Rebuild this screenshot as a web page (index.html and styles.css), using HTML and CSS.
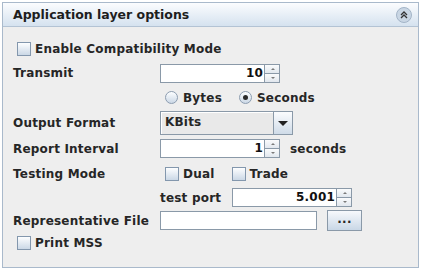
FILE: index.html
```html
<!DOCTYPE html>
<html lang="en">
<head>
    <meta charset="UTF-8">
    <title>Application layer options</title>
    <link rel="stylesheet" href="styles.css">
</head>
<body>
    <div class="panel">
        <div class="panel-header">
            <span class="panel-title">Application layer options</span>
            <span class="collapse-btn">
                <svg width="16" height="16" viewBox="0 0 16 16">
                    <circle cx="8" cy="8" r="7.5" fill="#c9d6e4" stroke="#a3b4c7"/>
                    <path d="M5 8 L8 5 L11 8 M5 11 L8 8 L11 11" fill="none" stroke="#333" stroke-width="1.3"/>
                </svg>
            </span>
        </div>

        <div class="panel-body">
            <label class="check full"><span class="box"></span>Enable Compatibility Mode</label>

            <span class="label">Transmit</span>
            <div class="cell">
                <div class="spinner">
                    <span class="spin-field">10</span>
                    <span class="spin-btns"><span class="up"></span><span class="down"></span></span>
                </div>
            </div>

            <span></span>
            <div class="cell options">
                <label class="radio"><span class="dot"></span>Bytes</label>
                <label class="radio"><span class="dot checked"></span>Seconds</label>
            </div>

            <span class="label">Output Format</span>
            <div class="cell">
                <div class="combo">
                    <span class="combo-value">KBits</span>
                    <span class="combo-arrow"></span>
                </div>
            </div>

            <span class="label">Report Interval</span>
            <div class="cell">
                <div class="spinner">
                    <span class="spin-field">1</span>
                    <span class="spin-btns"><span class="up"></span><span class="down"></span></span>
                </div>
                <span class="unit">seconds</span>
            </div>

            <span class="label">Testing Mode</span>
            <div class="cell options">
                <label class="check"><span class="box"></span>Dual</label>
                <label class="check"><span class="box"></span>Trade</label>
            </div>

            <span></span>
            <div class="cell">
                <span class="port-label">test port</span>
                <div class="spinner">
                    <span class="spin-field">5.001</span>
                    <span class="spin-btns"><span class="up"></span><span class="down"></span></span>
                </div>
            </div>

            <span class="label">Representative File</span>
            <div class="cell">
                <span class="text-field"></span>
                <span class="browse-btn">...</span>
            </div>

            <label class="check full"><span class="box"></span>Print MSS</label>
        </div>
    </div>
</body>
</html>
```

FILE: styles.css
```css
body {
    margin: 0;
    background-color: #FFFFFF;
    font-family: 'DejaVu Sans', sans-serif;
    font-weight: bold;
    font-size: 12px;
    letter-spacing: 0.2px;
    color: #262626;
}

.panel {
    margin: 2px 0 0 2px;
    width: 415px;
    height: 264px;
    border: 1px solid #a9b9cb;
    background-color: #eeeeee;
}

.panel-header {
    height: 23px;
    border-bottom: 1px solid #b3c3d4;
    background: linear-gradient(#fbfcfe, #d5e2ef);
    display: flex;
    align-items: center;
    justify-content: space-between;
    padding: 0 6px 0 10px;
}

.panel-title {
    font-size: 12.5px;
    letter-spacing: 0;
    color: #1e1e1e;
}

.collapse-btn {
    display: flex;
    margin-top: 1px;
}

.panel-body {
    display: grid;
    grid-template-columns: 147px 1fr;
    grid-template-rows: 25px 24px 25px 26px 25px 25px 23px 23px 21px;
    padding: 9px 0 0 10px;
}

.label {
    display: flex;
    align-items: center;
}

.cell {
    display: flex;
    align-items: center;
}

.full {
    grid-column: 1 / 3;
    padding-left: 4px;
}

/* Checkboxes & radios */
.check, .radio {
    display: flex;
    align-items: center;
    gap: 4px;
}

.box {
    width: 12px;
    height: 12px;
    border: 1px solid #8397ad;
    background: linear-gradient(#fdfeff, #cbd8e6);
}

.dot {
    width: 11px;
    height: 11px;
    border: 1px solid #8d9db0;
    border-radius: 50%;
    background: linear-gradient(#fdfeff, #cbd8e6);
    display: flex;
    align-items: center;
    justify-content: center;
    margin-right: 1px;
}

.dot.checked::after {
    content: '';
    width: 5px;
    height: 5px;
    border-radius: 50%;
    background-color: #2a2a2a;
}

.options {
    padding-left: 5px;
    gap: 17px;
}

/* Spinner */
.spinner {
    display: flex;
    height: 19px;
}

.spin-field {
    width: 102px;
    border: 1px solid #8a99a8;
    background-color: #FFFFFF;
    text-align: right;
    padding-right: 1px;
    line-height: 17px;
    color: #111111;
}

.spin-btns {
    display: flex;
    flex-direction: column;
    width: 15px;
}

.spin-btns span {
    flex: 1;
    border: 1px solid #8a99a8;
    border-left: none;
    background: linear-gradient(#fafbfc, #e1e7ee);
    position: relative;
}

.spin-btns .down {
    border-top: none;
}

.spin-btns span::after {
    content: '';
    position: absolute;
    left: 6px;
    top: 3px;
    border-left: 2px solid transparent;
    border-right: 2px solid transparent;
}

.spin-btns .up::after {
    border-bottom: 2px solid #7a7a7a;
}

.spin-btns .down::after {
    border-top: 2px solid #7a7a7a;
    top: 3px;
}

.unit {
    margin-left: 10px;
}

.port-label {
    width: 72px;
}

/* Combo box */
.combo {
    display: flex;
    width: 131px;
    height: 22px;
    border: 1px solid #8a99a8;
    background-color: #e9e9e9;
}

.combo-value {
    flex: 1;
    padding-left: 4px;
    line-height: 21px;
    border-right: 1px solid #8a99a8;
    box-shadow: inset 1px 1px 0 #ffffff;
}

.combo-arrow {
    width: 18px;
    background: linear-gradient(#fbfcfe, #cfdbe8);
    display: flex;
    align-items: center;
    justify-content: center;
}

.combo-arrow::after {
    content: '';
    border-left: 5px solid transparent;
    border-right: 5px solid transparent;
    border-top: 5px solid #222222;
}

/* File field */
.text-field {
    width: 155px;
    height: 17px;
    border: 1px solid #8a99a8;
    background-color: #FFFFFF;
}

.browse-btn {
    margin-left: 10px;
    width: 33px;
    height: 19px;
    border: 1px solid #8a99a8;
    background: linear-gradient(#f7f9fc, #c9d7e6);
    text-align: center;
    line-height: 16px;
}
```
